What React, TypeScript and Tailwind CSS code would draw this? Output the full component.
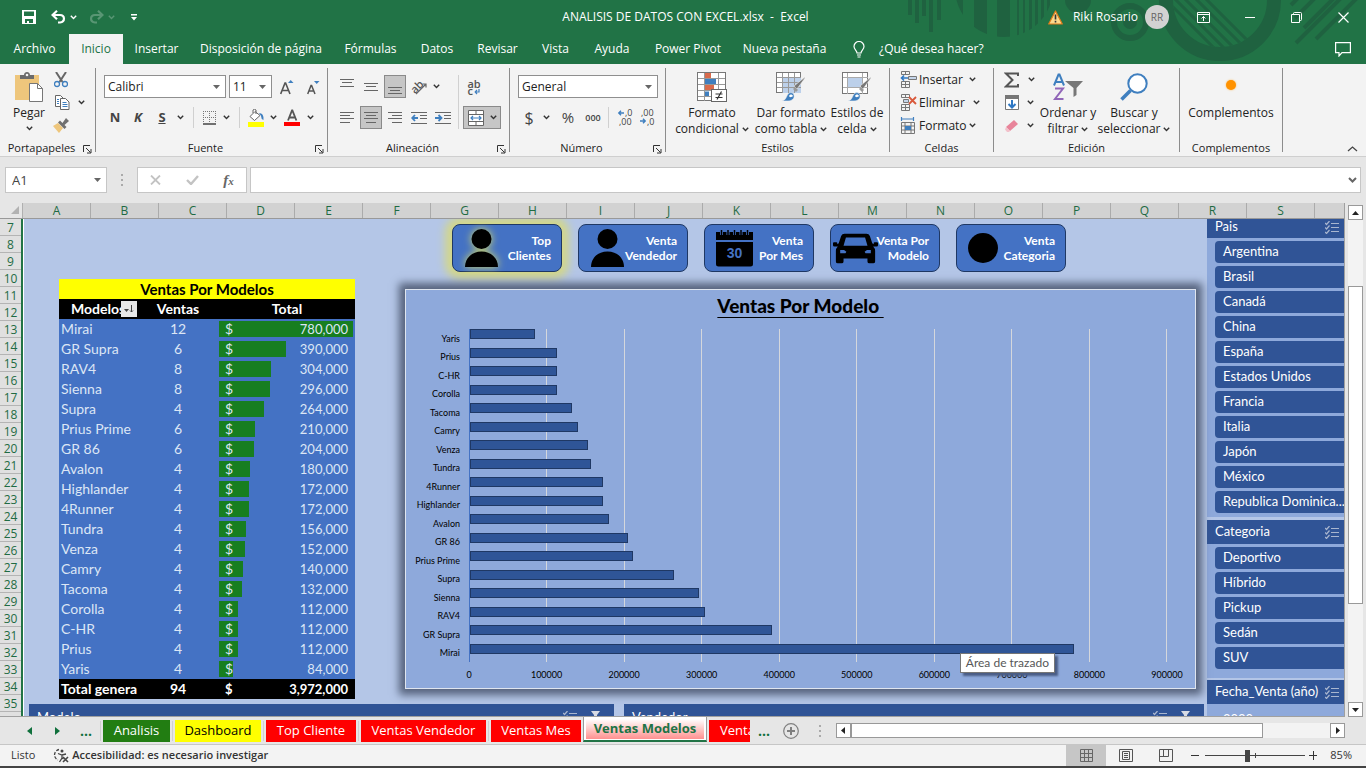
import React from "react";

const models: { name: string; sales: number; total: number }[] = [
  { name: "Mirai", sales: 12, total: 780000 },
  { name: "GR Supra", sales: 6, total: 390000 },
  { name: "RAV4", sales: 8, total: 304000 },
  { name: "Sienna", sales: 8, total: 296000 },
  { name: "Supra", sales: 4, total: 264000 },
  { name: "Prius Prime", sales: 6, total: 210000 },
  { name: "GR 86", sales: 6, total: 204000 },
  { name: "Avalon", sales: 4, total: 180000 },
  { name: "Highlander", sales: 4, total: 172000 },
  { name: "4Runner", sales: 4, total: 172000 },
  { name: "Tundra", sales: 4, total: 156000 },
  { name: "Venza", sales: 4, total: 152000 },
  { name: "Camry", sales: 4, total: 140000 },
  { name: "Tacoma", sales: 4, total: 132000 },
  { name: "Corolla", sales: 4, total: 112000 },
  { name: "C-HR", sales: 4, total: 112000 },
  { name: "Prius", sales: 4, total: 112000 },
  { name: "Yaris", sales: 4, total: 84000 },
];

const countries = ["Argentina", "Brasil", "Canadá", "China", "España", "Estados Unidos", "Francia", "Italia", "Japón", "México", "Republica Dominica..."];
const categories = ["Deportivo", "Híbrido", "Pickup", "Sedán", "SUV"];

const menu: { label: string; width: string }[] = [
  { label: "Archivo", width: "w-[69px]" },
  { label: "Inicio", width: "w-[54px]" },
  { label: "Insertar", width: "w-[67px]" },
  { label: "Disposición de página", width: "w-[142px]" },
  { label: "Fórmulas", width: "w-[77px]" },
  { label: "Datos", width: "w-[56px]" },
  { label: "Revisar", width: "w-[65px]" },
  { label: "Vista", width: "w-[51px]" },
  { label: "Ayuda", width: "w-[62px]" },
  { label: "Power Pivot", width: "w-[90px]" },
  { label: "Nueva pestaña", width: "w-[103px]" },
];

const money = (n: number) => n.toLocaleString("en-US");

/* ---------- small drawings ---------- */

function Caret({ className = "text-[#333]" }: { className?: string }) {
  return (
    <svg width="7" height="5" viewBox="0 0 7 5" className={`shrink-0 ${className}`} fill="none" stroke="currentColor" strokeWidth="1.4" aria-hidden>
      <path d="M.8.8 3.5 3.5 6.2.8" />
    </svg>
  );
}

function Triangle() {
  return (
    <svg width="7" height="4" viewBox="0 0 7 4" className="pointer-events-none absolute right-1.5 top-1/2 -mt-0.5" aria-hidden>
      <path d="M0 0h7L3.5 4z" fill="#666" />
    </svg>
  );
}

function Lines({ rows, color = "#666" }: { rows: [number, number, number][]; color?: string }) {
  return (
    <svg width="16" height="16" viewBox="0 0 16 16" stroke={color} aria-hidden>
      {rows.map(([y, a, b]) => (
        <path key={y} d={`M${a} ${y + 0.5}H${b}`} />
      ))}
    </svg>
  );
}

function Pattern() {
  return (
    <svg className="pointer-events-none absolute right-0 top-0" width="466" height="64" viewBox="0 0 466 64" aria-hidden>
      <defs>
        <clipPath id="globe"><circle cx="104" cy="-12" r="49" /></clipPath>
        <clipPath id="ringInner"><circle cx="320" cy="0" r="47" /></clipPath>
      </defs>
      <g fill="#1f6240" stroke="none">
        <path d="M8 0h4v15H8zM15 0h4v23h-4zM22 0h4v16h-4zM29 0h4v32h-4zM37 0h4v20h-4z" />
        <g clipPath="url(#globe)">
          <path d="M56 0h7v40h-7zM74 0h13v40H74zM97 0h13v40H97zM117 0h2v40h-2zM123 0h2v40h-2zM129 0h3v40h-3zM135 0h3v40h-3zM141 0h3v40h-3zM147 0h3v40h-3z" />
        </g>
        <circle cx="178" cy="0" r="13" />
        <circle cx="230" cy="22" r="7" />
      </g>
      <g fill="none" stroke="#1f6240">
        <circle cx="230" cy="22" r="16" strokeWidth="6" />
        <circle cx="320" cy="0" r="54" strokeWidth="14" />
        <g clipPath="url(#ringInner)" strokeWidth="3">
          <path d="M256-10l60 60M266-10l60 60M276-10l60 60M287-10l60 60M297-10l60 60" />
        </g>
        <path d="M391 5l8-8M395 18l22-22M404 28l32-32M396 43l46-46M416 39l42-42" strokeWidth="4" />
      </g>
    </svg>
  );
}

function GridIcon({ children, w = 28, h = 28 }: { children?: React.ReactNode; w?: number; h?: number }) {
  return (
    <svg width="32" height="30" viewBox="0 0 32 30" aria-hidden>
      <rect x="1.5" y="0.5" width={w} height={h} fill="#fff" stroke="#777" />
      {children}
    </svg>
  );
}

function Brush() {
  return (
    <g>
      <path d="M30 6 22 17l-3-3L30 5z" fill="#777" stroke="#f3f3f3" strokeWidth=".6" />
      <path d="m20 15 3 3-2 2-3-3z" fill="#999" />
      <path d="M7 29c4-1 4-4 6-7 2-2 5-2 6 1 1 4-3 6-6 6z" fill="#3f7fbf" stroke="#f3f3f3" strokeWidth=".6" />
      <path d="M14 24c1-2 3-2 4 0-1 1-3 2-4 0z" fill="#fff" />
    </g>
  );
}

function Checklist({ className = "text-[#a9b6cf]" }: { className?: string }) {
  return (
    <svg width="14" height="13" viewBox="0 0 14 13" fill="none" stroke="currentColor" className={className} aria-hidden>
      <path d="M0 2l1.5 1.5L4.500 0M0 6.500 1.500 8l3-3.500M0 11l1.500 1.500 3-3.500M6 2.500h8M6 6.500h8M6 10.500h8" strokeWidth="1.200" />
    </svg>
  );
}

function Person() {
  return (
    <svg width="33" height="38" viewBox="0 0 33 38" aria-hidden>
      <circle cx="16.500" cy="10" r="10" />
      <path d="M0 38c0-9 7-15.500 16.500-15.500S33 29 33 38z" />
    </svg>
  );
}

function CalendarShape() {
  return (
    <svg width="37" height="38" viewBox="0 0 37 38" aria-hidden>
      <path d="M0 3h37v8H0zM0 13h37v22q0 2.500-2.500 2.500h-32Q0 37.500 0 35z" />
      <g stroke="#4472c4" strokeWidth="3"><path d="M5.500 0v6M12 0v6M18.500 0v6M25 0v6M31.500 0v6" /></g>
      <g stroke="#000" strokeWidth="1.500"><path d="M5.500 1v5M12 1v5M18.500 1v5M25 1v5M31.500 1v5" /></g>
      <text x="18.500" y="29" textAnchor="middle" fontSize="14" fontWeight="700" fill="#4472c4" fontFamily="Liberation Sans, sans-serif">30</text>
    </svg>
  );
}

function CarShape() {
  return (
    <svg width="45" height="31" viewBox="0 0 47 31" aria-hidden>
      <path fillRule="evenodd" d="M12 0h23q2.500 0 3.500 2.500L41 10l1.500 1v-1q0-1 1-1H46q1 0 1 1v2q0 1.500-1.500 1.500H42q2 2 2 4.500v11q0 2-2 2h-4q-2 0-2-2v-3H11v3q0 2-2 2H5q-2 0-2-2V18q0-2.500 2-4.500H1.500Q0 13.500 0 12v-2q0-1 1-1h2.500q1 0 1 1v1L6 10l2.500-7.500Q9.500 0 12 0zM13.500 4 11 12.500h25L33.500 4zM7.500 17v3.500H13l1-1.500-2.500-2zM39.500 17v3.500H34L33 19l2.500-2z" />
    </svg>
  );
}

function CellsIcon({ kind }: { kind: "insert" | "delete" | "format" }) {
  if (kind === "format")
    return (
      <svg width="17" height="17" viewBox="0 0 17 17" fill="none" aria-hidden>
        <path d="M1.500 0v4M13.500 0v4M2 2h11" stroke="#3f7fbf" strokeWidth="1.200" />
        <path d="M1.500 5.500h13v11h-13zM1.500 9h13M1.500 13h13M5 5.500v11M11 5.500v11" stroke="#777" />
        <path d="M5 9h6v4H5z" fill="#3f7fbf" />
      </svg>
    );
  return (
    <svg width="17" height="17" viewBox="0 0 17 17" fill="none" aria-hidden>
      <path d="M1.500.5h8v3h-8zM5.500.5v3M1.500 10.500h8v6h-8zM5.500 10.500v6M1.500 13.500h8" stroke="#777" />
      {kind === "insert" ? (
        <>
          <path d="M8.500 5.500h8v3h-8z" stroke="#777" fill="#c5d5ea" />
          <path d="M8 7H1.500M4 4.500 1.500 7 4 9.500" stroke="#2f78c4" strokeWidth="1.600" />
        </>
      ) : (
        <>
          <path d="M3.500 5.500h5v3h-5z" stroke="#777" fill="#c5d5ea" />
          <path d="m9 3 7 7M16 3l-7 7" stroke="#d9593c" strokeWidth="1.800" />
        </>
      )}
    </svg>
  );
}

/* ---------- ribbon pieces ---------- */

function Group({ title, width, launcher, children }: { title: string; width: string; launcher?: boolean; children: React.ReactNode }) {
  return (
    <section className={`flex shrink-0 flex-col border-r border-[#8c8c8c] ${width}`}>
      <div className="flex h-[73px]">{children}</div>
      <div className="flex h-[11px] items-start text-[11px] leading-[14px] text-[#222]">
        <h2 className="flex-1 text-center">{title}</h2>
        {launcher && (
          <button aria-label={`Opciones de ${title}`} className="w-3 pt-1">
            <svg width="9" height="9" viewBox="0 0 9 9" fill="none" stroke="#333" aria-hidden>
              <path d="M.5 7V.5H7M3 3l4.500 4.500M8 4v4H4" />
            </svg>
          </button>
        )}
      </div>
    </section>
  );
}

function Big({ icon, lines, width, caret = "inline" }: { icon: React.ReactNode; lines: string[]; width: string; caret?: "inline" | "below" | "none" }) {
  return (
    <button className={`flex shrink-0 flex-col items-center pt-1 text-xs leading-4 whitespace-nowrap text-[#222] ${width}`}>
      <span className="mb-[3px] flex h-[30px] items-center">{icon}</span>
      {lines.map((line, i) => (
        <span key={line} className="flex items-center gap-[3px]">
          {line}
          {caret === "inline" && i === lines.length - 1 && <Caret />}
        </span>
      ))}
      {caret === "below" && <span className="flex h-3.5 items-center"><Caret /></span>}
    </button>
  );
}

function Tool({ label, width = "w-[22px]", active, children }: { label: string; width?: string; active?: boolean; children: React.ReactNode }) {
  return (
    <button aria-label={label} className={`flex h-[23px] shrink-0 items-center justify-center ${width} ${active ? "border border-[#8a8a8a] bg-[#c6c6c6]" : ""}`}>
      {children}
    </button>
  );
}

function Combo({ label, value, width }: { label: string; value: string; width: string }) {
  return (
    <div className={`relative h-[23px] ${width}`}>
      <select aria-label={label} className="block h-full w-full appearance-none border border-[#8f8f8f] bg-white pl-[3px] text-xs text-[#222]" defaultValue={value}>
        <option>{value}</option>
      </select>
      <Triangle />
    </div>
  );
}

function Rule({ className = "h-[21px]" }: { className?: string }) {
  return <span className={`w-px shrink-0 bg-[#d0d0d0] ${className}`} />;
}

function Ribbon() {
  return (
    <div className="flex h-[93px] shrink-0 overflow-hidden border-b border-[#cfcfcf] bg-[#f3f3f3] py-1">
      <Group title="Portapapeles" width="w-24" launcher>
        <Big
          width="w-[53px] pl-[5px]"
          lines={["Pegar"]}
          caret="below"
          icon={
            <svg width="28" height="30" viewBox="0 0 28 30" aria-hidden>
              <path d="M0 3h24v25H0z" fill="#eec67c" />
              <path d="M5 7V3h4c0-4 6-4 6 0h4v4z" fill="#6b6b6b" />
              <circle cx="12" cy="3" r="1.300" fill="#f3f3f3" />
              <path d="M14.500 11.500h8l5 5v13h-13z" fill="#fff" stroke="#777" />
              <path d="M22.500 11.500v5h5" fill="none" stroke="#777" />
            </svg>
          }
        />
        <div className="flex flex-col">
          <Tool label="Cortar" width="w-4">
            <svg width="14" height="16" viewBox="0 0 14 16" fill="none" aria-hidden>
              <path d="m2 0 6.500 10M12 0 5.500 10" stroke="#666" strokeWidth="2" />
              <circle cx="3" cy="12" r="2.500" stroke="#3f7fbf" strokeWidth="1.300" />
              <circle cx="11" cy="12" r="2.500" stroke="#3f7fbf" strokeWidth="1.300" />
            </svg>
          </Tool>
          <Tool label="Copiar" width="w-8">
            <svg width="16" height="15" viewBox="0 0 16 15" fill="#fff" className="mr-2" aria-hidden>
              <path d="M1.500.5h5l3 3v8h-8z" stroke="#666" />
              <path d="M6.500 3.500h5l3.500 3.500v7.500H6.500z" stroke="#666" />
              <path d="M3 4.500h2M3 6.500h2M3 8.500h2M8.500 7.500h4M8.500 9.500h5M8.500 11.500h5" stroke="#3f7fbf" />
            </svg>
            <Caret />
          </Tool>
          <Tool label="Copiar formato" width="w-4">
            <svg width="16" height="15" viewBox="0 0 16 15" aria-hidden>
              <path d="m0 8 5-3 5 5-4 5z" fill="#eec67c" />
              <path d="m5 4.500 2-2 2.500 2.500L13 0l3 3-4.500 4 2 2-2 2z" fill="#707070" />
            </svg>
          </Tool>
        </div>
      </Group>

      <Group title="Fuente" width="w-[232px]" launcher>
        <div className="flex flex-col gap-2 pl-2 pt-[7px]">
          <div className="flex gap-[3px]">
            <Combo label="Fuente" value="Calibri" width="w-[122px]" />
            <Combo label="Tamaño de fuente" value="11" width="w-[43px]" />
            <Tool label="Aumentar tamaño" width="w-6">
              <svg width="14" height="16" viewBox="0 0 14 16" fill="none" aria-hidden>
                <path d="M.7 15 5 4h.6L10 15M2.500 11.500h5.700" stroke="#555" strokeWidth="1.600" />
                <path d="M8 4h5.500L10.700 1z" fill="#3f7fbf" />
              </svg>
            </Tool>
            <Tool label="Disminuir tamaño" width="w-[22px]">
              <svg width="13" height="16" viewBox="0 0 13 16" fill="none" aria-hidden>
                <path d="M.7 15 4 6.500h.6L8 15M2.200 12h4" stroke="#555" strokeWidth="1.500" />
                <path d="M7 2h5.500L9.700 5z" fill="#3f7fbf" />
              </svg>
            </Tool>
          </div>
          <div className="flex items-center text-[13px] font-bold text-[#444]">
            <Tool label="Negrita" width="w-[22px]">N</Tool>
            <Tool label="Cursiva" width="w-6"><i>K</i></Tool>
            <Tool label="Subrayado" width="w-6"><u>S</u></Tool>
            <Tool label="Más subrayados" width="w-3"><Caret /></Tool>
            <span className="flex w-3.5 justify-center"><Rule /></span>
            <Tool label="Bordes" width="w-5">
              <svg width="14" height="14" viewBox="0 0 14 14" stroke="#777" strokeDasharray="1 1" aria-hidden>
                <path d="M0 .5h13M0 6.500h13M.5 0v12M6.500 0v12M12.500 0v12" />
                <path d="M0 13h13" strokeDasharray="none" stroke="#444" strokeWidth="1.500" />
              </svg>
            </Tool>
            <Tool label="Más bordes" width="w-3"><Caret /></Tool>
            <span className="flex w-3.5 justify-center"><Rule /></span>
            <Tool label="Color de relleno" width="w-5">
              <svg width="18" height="18" viewBox="0 0 18 18" aria-hidden>
                <path d="M1 13h16v5H1z" fill="#ff0" />
                <path d="M8 2.500 3 7.500l4.500 4L13 6.500 8 2.500zM6 4V1q1.500-1.500 3 0v4" fill="#fff" stroke="#666" />
                <path d="M12 4q5 0 4.500 7-2.500-1-2.500-4z" fill="#3f7fbf" />
              </svg>
            </Tool>
            <Tool label="Más colores de relleno" width="w-3.5"><Caret /></Tool>
            <Tool label="Color de fuente" width="w-6">
              <svg width="16" height="18" viewBox="0 0 16 18" aria-hidden>
                <path d="M4 11.500 8 1.500h.4l4 10M5.500 8.500h5.500" fill="none" stroke="#555" strokeWidth="1.800" />
                <path d="M0 13h16v4H0z" fill="#f00" />
              </svg>
            </Tool>
            <Tool label="Más colores de fuente" width="w-3"><Caret /></Tool>
          </div>
        </div>
      </Group>

      <Group title="Alineación" width="w-[182px]" launcher>
        <div className="flex flex-col gap-2 pl-2 pt-[7px]">
          <div className="flex gap-0.5">
            <Tool label="Alinear arriba"><Lines rows={[[0, 1, 15], [3, 3, 13], [7, 1, 15]]} /></Tool>
            <Tool label="Alinear al medio"><Lines rows={[[4, 1, 15], [7, 3, 13], [11, 1, 15]]} /></Tool>
            <Tool label="Alinear abajo" active><Lines rows={[[8, 1, 15], [11, 3, 13], [14, 1, 15]]} /></Tool>
            <Tool label="Orientación">
              <svg width="17" height="16" viewBox="0 0 17 16" aria-hidden>
                <text x="0" y="12" transform="rotate(-45 6 9)" fontSize="11" fontWeight="600" fill="#555">ab</text>
                <path d="M5 15 15 5M11.500 5H15v3.500" fill="none" stroke="#666" strokeWidth="1.200" />
              </svg>
            </Tool>
            <Tool label="Más orientaciones" width="w-2"><Caret /></Tool>
          </div>
          <div className="flex gap-0.5">
            <Tool label="Alinear a la izquierda"><Lines rows={[[2, 1, 15], [5, 1, 11], [8, 1, 15], [12, 1, 11]]} /></Tool>
            <Tool label="Centrar" active><Lines rows={[[2, 1, 15], [5, 3, 13], [8, 1, 15], [12, 3, 13]]} /></Tool>
            <Tool label="Alinear a la derecha"><Lines rows={[[2, 1, 15], [5, 5, 15], [8, 1, 15], [12, 5, 15]]} /></Tool>
            <Tool label="Disminuir sangría">
              <svg width="16" height="16" viewBox="0 0 16 16" fill="none" aria-hidden>
                <path d="M0 2.500h16M9 5.500h7M9 8.500h7M0 13.500h16" stroke="#666" />
                <path d="M7 8H1.500M4 5 1.200 8 4 11" stroke="#3f7fbf" strokeWidth="1.800" />
              </svg>
            </Tool>
            <Tool label="Aumentar sangría">
              <svg width="16" height="16" viewBox="0 0 16 16" fill="none" aria-hidden>
                <path d="M0 2.500h16M9 5.500h7M9 8.500h7M0 13.500h16" stroke="#666" />
                <path d="M0 8h6M3.500 5l3 3-3 3" stroke="#3f7fbf" strokeWidth="1.800" />
              </svg>
            </Tool>
          </div>
        </div>
        <div className="flex pl-1 pt-[7px]">
          <Rule className="h-[54px]" />
        </div>
        <div className="flex flex-col gap-2 pl-1 pt-[7px]">
          <Tool label="Ajustar texto">
            <span className="relative text-left text-[11px] leading-[7px] font-semibold text-[#555]">
              <span className="block">ab</span>
              <span className="block">c</span>
              <svg width="7" height="6" viewBox="0 0 7 6" fill="none" className="absolute -bottom-px right-0" aria-hidden>
                <path d="M5 0v3H1.500M3 1 1.200 3 3 5" stroke="#3f7fbf" strokeWidth="1.200" />
              </svg>
            </span>
          </Tool>
          <Tool label="Combinar y centrar" width="w-[38px]" active>
            <svg width="16" height="16" viewBox="0 0 16 16" fill="none" className="mr-1.5" aria-hidden>
              <path d="M.5.5h15v15H.5z" fill="#fff" stroke="#666" />
              <path d="M0 4.500h16M0 11.500h16M8 0v4.500M8 11.500V16" stroke="#666" />
              <path d="M3 8h10M5 6 3 8l2 2M11 6l2 2-2 2" stroke="#3f7fbf" strokeWidth="1.200" />
            </svg>
            <Caret />
          </Tool>
        </div>
      </Group>

      <Group title="Número" width="w-[156px]" launcher>
        <div className="flex flex-col gap-2 pl-2 pt-[7px]">
          <Combo label="Formato de número" value="General" width="w-[140px]" />
          <div className="flex items-center text-[#444]">
            <Tool label="Moneda"><span className="text-base">$</span></Tool>
            <Tool label="Más monedas" width="w-3"><Caret /></Tool>
            <Tool label="Porcentaje" width="w-8"><span className="text-[15px]">%</span></Tool>
            <Tool label="Millares" width="w-[18px]"><span className="text-[9px] font-semibold">000</span></Tool>
            <span className="flex w-3 justify-center"><Rule /></span>
            <Tool label="Aumentar decimales">
              <svg width="17" height="17" viewBox="0 0 17 17" aria-hidden>
                <text x="8" y="7" fontSize="9" fill="#444">,0</text>
                <text x="2" y="16" fontSize="9" fill="#444">,00</text>
                <path d="M7 4H2M4 1.800 1.800 4 4 6.200" fill="none" stroke="#3f7fbf" strokeWidth="1.400" />
              </svg>
            </Tool>
            <Tool label="Disminuir decimales">
              <svg width="17" height="17" viewBox="0 0 17 17" aria-hidden>
                <text x="2" y="7" fontSize="9" fill="#444">,00</text>
                <text x="8" y="16" fontSize="9" fill="#444">,0</text>
                <path d="M1 12h5M4 9.800 6.200 12 4 14.200" fill="none" stroke="#3f7fbf" strokeWidth="1.400" />
              </svg>
            </Tool>
          </div>
        </div>
      </Group>

      <Group title="Estilos" width="w-[224px]">
        <Big
          width="ml-1 w-[84px]"
          lines={["Formato", "condicional"]}
          icon={
            <GridIcon>
              <path d="M9 1h6v5.500H9zM9 13h9v5.500H9z" fill="#d96b4c" />
              <path d="M9 7h11v5.500H9zM9 19.500h4V25H9z" fill="#3f7fbf" />
              <path d="M2 6.500h27M2 12.500h27M2 18.500h27M2 24.500h27M8.500 1v28M22.500 1v28" fill="none" stroke="#999" />
              <rect x="15.500" y="17.500" width="15" height="12" fill="#fff" stroke="#666" />
              <path d="M19.500 22h7M19.500 25.500h7M25.500 19.500l-4.500 8" stroke="#333" strokeWidth="1.200" />
            </GridIcon>
          }
        />
        <Big
          width="w-[74px]"
          lines={["Dar formato", "como tabla"]}
          icon={
            <GridIcon w={24} h={20}>
              <path d="M8 6h18v15H8z" fill="#bcd0ea" />
              <path d="M2 5.500h24M2 10.500h24M2 15.500h24M7.500 1v20M13.500 1v20M19.500 1v20" stroke="#999" />
              <Brush />
            </GridIcon>
          }
        />
        <Big
          width="w-[58px]"
          lines={["Estilos de", "celda"]}
          icon={
            <GridIcon w={25} h={21}>
              <path d="M7 6h14v9H7z" fill="#bcd0ea" />
              <path d="M2 5.500h25M2 15.500h25M6.500 1v21M21.500 1v21" stroke="#aaa" />
              <Brush />
            </GridIcon>
          }
        />
      </Group>

      <Group title="Celdas" width="w-[104px]">
        <div className="flex flex-col pl-2.5 text-xs text-[#222]">
          <button className="flex h-[23px] items-center gap-0.5"><CellsIcon kind="insert" />Insertar<span className="ml-1"><Caret /></span></button>
          <button className="flex h-[23px] items-center gap-0.5"><CellsIcon kind="delete" />Eliminar<span className="ml-1.5"><Caret /></span></button>
          <button className="flex h-[23px] items-center gap-0.5"><CellsIcon kind="format" />Formato<Caret /></button>
        </div>
      </Group>

      <Group title="Edición" width="w-[186px]">
        <div className="flex w-[43px] flex-col pl-2.5">
          <button aria-label="Autosuma" className="flex h-[23px] items-center gap-2">
            <svg width="16" height="16" viewBox="0 0 16 16" fill="none" stroke="#555" strokeWidth="2" aria-hidden><path d="M14 4V1.500H2L8.500 8 2 14.500h12V12" /></svg>
            <Caret />
          </button>
          <button aria-label="Rellenar" className="flex h-[23px] items-center gap-2 pl-px">
            <svg width="14" height="15" viewBox="0 0 14 15" fill="none" aria-hidden>
              <path d="M.5.5h13v14H.5z" fill="#fff" stroke="#777" /><path d="M0 0h14v4H0z" fill="#777" />
              <path d="M7 5v7M3.500 9 7 12.500 10.500 9" stroke="#2f78c4" strokeWidth="2" />
            </svg>
            <Caret />
          </button>
          <button aria-label="Borrar" className="flex h-[23px] items-center gap-2 pl-px">
            <svg width="14" height="14" viewBox="0 0 14 14" aria-hidden>
              <path d="m1 8 8-7 4 4-8 7z" fill="#e8849a" /><path d="m1 8 4 4-1 1H2L0 10.500z" fill="#f3c1cb" />
            </svg>
            <Caret />
          </button>
        </div>
        <Big
          width="w-[62px]"
          lines={["Ordenar y", "filtrar"]}
          icon={
            <svg width="30" height="28" viewBox="0 0 30 28" fill="none" aria-hidden>
              <path d="m1 12.500 4.500-11h1l4.500 11M2.800 9h6.400" stroke="#3f7fbf" strokeWidth="2" />
              <path d="M2 15.500h8L2 26h8.500" stroke="#9166b8" strokeWidth="2" />
              <path d="M12 8h18l-6.500 7v7l-3 2v-9z" fill="#777" />
            </svg>
          }
        />
        <Big
          width="w-[70px]"
          lines={["Buscar y", "seleccionar"]}
          icon={
            <svg width="28" height="28" viewBox="0 0 28 28" fill="none" aria-hidden>
              <circle cx="17.500" cy="10.500" r="9.200" fill="#fff" stroke="#3f7fbf" strokeWidth="2" />
              <path d="m10.500 17.500-9 9" stroke="#3f7fbf" strokeWidth="3.500" />
            </svg>
          }
        />
      </Group>

      <Group title="Complementos" width="w-[103px]">
        <Big
          width="w-full"
          caret="none"
          lines={["Complementos"]}
          icon={<span className="mb-1 size-2.5 rounded-full bg-[#ff9200] shadow-[0_0_2px_#ffb850]" />}
        />
      </Group>

      <button aria-label="Contraer la cinta" className="ml-auto flex items-end pr-2">
        <svg width="11" height="6" viewBox="0 0 11 6" fill="none" stroke="#444" strokeWidth="1.300" aria-hidden><path d="m1 5 4.500-4L10 5" /></svg>
      </button>
    </div>
  );
}

/* ---------- window chrome ---------- */

function TitleBar() {
  return (
    <div className="relative flex h-[34px] shrink-0 items-center text-white">
      <div className="flex flex-1 items-center pl-[22px]">
        <button aria-label="Guardar" className="mr-[15px]">
          <svg width="14" height="14" viewBox="0 0 14 14" aria-hidden>
            <path fillRule="evenodd" d="M0 0h14v14H0zM2 1.500V6h10V1.500zM3 9v4h2v-2h2v2h4V9z" fill="#fff" />
          </svg>
        </button>
        <button aria-label="Deshacer" className="mr-1.5 flex items-center gap-1">
          <svg width="15" height="14" viewBox="0 0 15 14" fill="none" stroke="#fff" strokeWidth="2.200" aria-hidden><path d="M6 .8 1.500 5 6 9.200M2 5h7c5 0 5.500 7 0 7.500H7" /></svg>
          <Caret className="text-white" />
        </button>
        <button aria-label="Rehacer" className="ml-1.5 mr-3.5 flex items-center gap-1 opacity-25">
          <svg width="15" height="14" viewBox="0 0 15 14" fill="none" stroke="#fff" strokeWidth="2.200" aria-hidden><path d="m9 .8 4.500 4.200L9 9.200M13 5H6C1 5 .5 12 6 12.500h2" /></svg>
          <Caret className="text-white" />
        </button>
        <button aria-label="Personalizar barra" className="pl-0.5">
          <svg width="6" height="7" viewBox="0 0 6 7" fill="#fff" aria-hidden><path d="M0 0h6v1.500H0zM0 3h6L3 6.500z" /></svg>
        </button>
      </div>
      <h1 className="text-xs whitespace-pre">ANALISIS DE DATOS CON EXCEL.xlsx{"  -  "}Excel</h1>
      <div className="flex flex-1 items-center justify-end pr-[17px]">
        <svg width="15" height="15" viewBox="0 0 15 15" className="mr-2.5" aria-hidden>
          <path d="M7.500 1 14.300 14H.7z" fill="#fbd98c" stroke="#e07b1a" strokeWidth="1.200" strokeLinejoin="round" />
          <path d="M7.500 4.500v5M7.500 10.800v1.700" stroke="#333" strokeWidth="1.600" />
        </svg>
        <span className="mr-[7px] text-xs">Riki Rosario</span>
        <span className="flex size-6 items-center justify-center rounded-full bg-[#d2d2d2] text-[10px] text-[#666]">RR</span>
        <button aria-label="Opciones de la cinta" className="ml-7">
          <svg width="13" height="11" viewBox="0 0 13 11" fill="none" stroke="#fff" aria-hidden><path d="M.5.5h12v10H.5zM.5 2.500h12M6.500 9V4.500M4.500 6.500l2-2 2 2" /></svg>
        </button>
        <button aria-label="Minimizar" className="ml-[35px]">
          <svg width="10" height="11" viewBox="0 0 10 11" stroke="#fff" aria-hidden><path d="M0 5.500h10" /></svg>
        </button>
        <button aria-label="Restaurar" className="ml-9">
          <svg width="11" height="11" viewBox="0 0 11 11" fill="none" stroke="#fff" aria-hidden><path d="M.5 2.500h8v8h-8zM2.500 2.500v-1q0-1 1-1h6q1 0 1 1v6q0 1-1 1h-1" /></svg>
        </button>
        <button aria-label="Cerrar" className="ml-9">
          <svg width="11" height="11" viewBox="0 0 11 11" stroke="#fff" strokeWidth="1.200" aria-hidden><path d="m.5.5 10 10M10.500.5l-10 10" /></svg>
        </button>
      </div>
    </div>
  );
}

function MenuBar() {
  return (
    <nav className="relative flex h-[30px] shrink-0 items-stretch text-xs whitespace-nowrap text-white">
      {menu.map(({ label, width }) => (
        <button key={label} className={`${width} ${label === "Inicio" ? "bg-[#f3f3f3] text-[#217346]" : ""}`}>{label}</button>
      ))}
      <button className="ml-[17px] flex items-center gap-3.5">
        <svg width="12" height="17" viewBox="0 0 12 17" fill="none" stroke="#fff" strokeWidth="1.200" aria-hidden>
          <path d="M4 12c0-2.500-3-3.500-3-6.500a5 5 0 0 1 10 0C11 8.500 8 9.500 8 12zM4 14h4M4.500 16h3" />
        </svg>
        ¿Qué desea hacer?
      </button>
      <button aria-label="Comentarios" className="ml-auto pr-[15px]">
        <svg width="16" height="15" viewBox="0 0 16 15" fill="none" stroke="#fff" strokeWidth="1.200" aria-hidden><path d="M.6.6h14.800v10H7l-3 3.400v-3.400H.6z" /></svg>
      </button>
    </nav>
  );
}

function FormulaBar() {
  return (
    <div className="flex h-[46px] shrink-0 items-center bg-[#e6e6e6] pl-[5px] pr-[5px]">
      <div className="relative h-[26px] w-[102px]">
        <input aria-label="Cuadro de nombres" className="block h-full w-full border border-[#c6c6c6] bg-white pl-1.5 text-[13px] text-[#444]" defaultValue="A1" />
        <Triangle />
      </div>
      <span className="flex w-[30px] flex-col items-center gap-[3px]">
        <i className="size-0.5 bg-[#aaa]" /><i className="size-0.5 bg-[#aaa]" /><i className="size-0.5 bg-[#aaa]" />
      </span>
      <div className="mr-[3px] flex h-[26px] w-[110px] items-center justify-around border border-[#c6c6c6] bg-white">
        <button aria-label="Cancelar"><svg width="11" height="10" viewBox="0 0 11 10" stroke="#c3c3c3" strokeWidth="1.800" aria-hidden><path d="m1 .5 9 9M10 .5l-9 9" /></svg></button>
        <button aria-label="Introducir"><svg width="13" height="10" viewBox="0 0 13 10" fill="none" stroke="#c3c3c3" strokeWidth="2.400" aria-hidden><path d="m1 5 4 4 7-8" /></svg></button>
        <button aria-label="Insertar función" className="font-['Liberation_Serif',serif] text-[15px] leading-4 font-bold text-[#666] italic">f<span className="text-[11px]">x</span></button>
      </div>
      <div className="relative h-[26px] min-w-0 flex-1">
        <input aria-label="Barra de fórmulas" className="block h-full w-full border border-[#c6c6c6] bg-white px-2 text-xs" />
        <svg width="9" height="7" viewBox="0 0 9 7" fill="none" stroke="#666" strokeWidth="2" className="pointer-events-none absolute right-1 top-2.5" aria-hidden><path d="m1 1 3.500 3.500L8 1" /></svg>
      </div>
    </div>
  );
}

/* ---------- worksheet ---------- */

function NavShape({ lines, icon, pad, glow }: { lines: [string, string]; icon: React.ReactNode; pad: string; glow?: boolean }) {
  return (
    <button
      className={`flex h-12 w-[110px] shrink-0 items-center rounded-lg border border-[#1f3864] bg-[#4472c4] pr-2.5 text-right text-xs leading-[15px] font-bold whitespace-nowrap text-white ${pad} ${glow ? "shadow-[0_0_8px_7px_#d3d78a]" : ""}`}
    >
      <span className={`shrink-0 ${glow ? "drop-shadow-[0_0_4px_#d8dc60]" : ""}`}>{icon}</span>
      <span className="flex min-w-0 flex-1 justify-end"><span>{lines[0]}<br />{lines[1]}</span></span>
    </button>
  );
}

function ModelTable() {
  return (
    <table className="w-[296px] shrink-0 table-fixed border-collapse bg-[#4472c4] text-sm leading-5 text-[#dce6f5]">
      <colgroup><col className="w-[78px]" /><col className="w-[82px]" /><col className="w-[136px]" /></colgroup>
      <thead className="leading-5 font-bold">
        <tr><th colSpan={3} className="h-5 bg-[#ff0] p-0 text-[15px] leading-5 text-black">Ventas Por Modelos</th></tr>
        <tr className="bg-black text-white">
          <th className="h-5 p-0">
            <div className="flex h-5 items-center pl-3">
              <span className="w-[50px] overflow-hidden text-left">Modelos</span>
              <button aria-label="Filtrar modelos" className="flex size-4 items-center justify-center bg-[#e8e8e8]">
                <svg width="10" height="9" viewBox="0 0 10 9" aria-hidden><path d="M0 4h5L2.500 7z" fill="#444" /><path d="M7.500 0v7M6 5.500 7.500 7 9 5.500" fill="none" stroke="#444" /></svg>
              </button>
            </div>
          </th>
          <th className="h-5 p-0">Ventas</th>
          <th className="h-5 p-0">Total</th>
        </tr>
      </thead>
      <tbody>
        {models.map((m) => (
          <tr key={m.name}>
            <td className="h-5 p-0 pl-0.5 whitespace-nowrap">{m.name}</td>
            <td className="h-5 p-0 text-center">{m.sales}</td>
            <td className="h-5 p-0 text-[13px] leading-5">
              <div className="relative flex h-5 justify-between pl-1.5 pr-[7px]">
                <span className="absolute left-0 top-0.5 h-4 bg-[#177e20]" style={{ width: Math.round((m.total / 780000) * 134) }} />
                <span className="relative text-sm leading-5">$</span>
                <span className="relative">{money(m.total)}</span>
              </div>
            </td>
          </tr>
        ))}
        <tr className="bg-black font-bold text-white">
          <td className="h-5 p-0 pl-0.5 whitespace-nowrap">Total genera</td>
          <td className="h-5 p-0 text-center">94</td>
          <td className="h-5 p-0 text-[13px] leading-5"><div className="flex justify-between pl-1.5 pr-[7px]"><span>$</span><span>3,972,000</span></div></td>
        </tr>
      </tbody>
    </table>
  );
}

function Chart() {
  const bars = [...models].reverse();
  return (
    <figure className="relative flex h-[400px] flex-col border border-[#dfe5ef] bg-[#8ea9db] text-[9px] text-black shadow-[0_0_8px_6px_#56637d]">
      <figcaption className="h-[39px] text-center text-[19px] leading-8 font-black whitespace-pre underline decoration-1 underline-offset-4">Ventas Por Modelo </figcaption>
      <div className="flex h-[333px] gap-[9px] pr-7">
        <ul className="flex w-[54px] flex-col text-right whitespace-nowrap">
          {bars.map((b) => <li key={b.name} className="flex flex-1 items-center justify-end">{b.name}</li>)}
        </ul>
        <div className="relative min-w-0 flex-1">
          <div className="absolute inset-0 flex border-l border-[#dde3ee]">
            {Array.from({ length: 9 }, (_, i) => <span key={i} className="flex-1 border-r border-[#d4d7dc]" />)}
          </div>
          <div className="relative flex h-full flex-col border-l border-[#4472c4]">
            {bars.map((b) => (
              <div key={b.name} className="flex-1">
                <div className="h-2.5 border border-[#1f3864] bg-[#2f5597]" style={{ width: `${b.total / 9000}%` }} />
              </div>
            ))}
          </div>
        </div>
      </div>
      <div className="ml-[63px] mr-7 flex justify-between pt-1.5">
        {Array.from({ length: 10 }, (_, i) => <span key={i} className="flex w-0 justify-center">{i * 100000}</span>)}
      </div>
      <div role="tooltip" className="absolute bottom-[15px] right-[140px] border border-[#767676] bg-white px-[5px] text-xs leading-[18px] whitespace-nowrap text-[#575757] shadow-[3px_3px_2px_#4a5d85]">
        Área de trazado
      </div>
    </figure>
  );
}

function SlicerHeader({ title, height = "h-6" }: { title: string; height?: string }) {
  return (
    <div className={`flex shrink-0 items-center justify-between bg-[#305496] pl-2 pr-[5px] text-[13px] whitespace-nowrap text-white ${height}`}>
      {title}
      <Checklist />
    </div>
  );
}

function SlicerItems({ items }: { items: string[] }) {
  return (
    <div className="flex flex-col gap-[3px] bg-[#8ea9db] pl-2 pt-[3px]">
      {items.map((item) => (
        <button key={item} className="h-[22px] rounded-l bg-[#305496] pl-2 text-left text-[13px] whitespace-nowrap text-white">{item}</button>
      ))}
    </div>
  );
}

function WideSlicer({ title, grow }: { title: string; grow: string }) {
  return (
    <div className={`flex h-10 items-start bg-[#305496] pl-2 pr-[11px] pt-[5px] text-[13px] leading-4 text-white ${grow}`}>
      {title}
      <span className="ml-auto mr-[14px] pt-0.5"><Checklist /></span>
      <svg width="12" height="13" viewBox="0 0 12 13" className="mt-0.5" aria-hidden><path d="M0 0h9L6 4v5l-3-2V4z" fill="#d7dbe4" /><path d="m7 6 4 4M11 6l-4 4" stroke="#d7dbe4" /></svg>
    </div>
  );
}

function Sheet() {
  return (
    <div className="flex min-h-0 flex-1 bg-[#e6e6e6]">
      <div className="flex min-w-0 flex-1 flex-col border-r border-b border-[#a0a0a0]">
        <div className="flex h-4 shrink-0 overflow-hidden border-b border-[#999] bg-[#d2d2d2] text-xs leading-[15px] text-[#1e6b43]">
          <span className="flex w-[23px] shrink-0 items-end justify-end border-r border-[#b0b0b0] bg-[#e6e6e6] pb-1 pr-[3px]">
            <svg width="8" height="8" viewBox="0 0 8 8" aria-hidden><path d="M8 0v8H0z" fill="#b2b2b2" /></svg>
          </span>
          {"ABCDEFGHIJKLMNOPQRS".split("").map((c) => (
            <span key={c} className="w-[68px] shrink-0 border-r border-[#ababab] text-center">{c}</span>
          ))}
        </div>
        <div className="flex min-h-0 flex-1 overflow-hidden">
          <div className="w-[23px] shrink-0 border-r-2 border-[#217346] bg-[#e0e0e0] text-center text-xs leading-[17px] text-[#1e6b43]">
            {Array.from({ length: 30 }, (_, i) => <div key={i} className="h-[17px] border-b border-[#b4b4b4]">{i < 29 ? i + 7 : ""}</div>)}
          </div>
          <div className="flex min-w-0 flex-1 border-l border-white bg-[#b4c6e7] font-['Lato','Noto_Sans',sans-serif]">
            <div className="flex min-w-0 flex-1 flex-col">
              <div className="flex shrink-0 pl-[35px] pr-[11px]">
                <div className="pt-[60px]"><ModelTable /></div>
                <div className="flex min-w-0 flex-1 flex-col pl-[50px]">
                  <div className="mb-[17px] flex gap-4 pl-[47px] pt-[5px]">
                    <NavShape glow lines={["Top", "Clientes"]} pad="pl-3" icon={<Person />} />
                    <NavShape lines={["Venta", "Vendedor"]} pad="pl-3" icon={<Person />} />
                    <NavShape lines={["Venta", "Por Mes"]} pad="pl-[11px]" icon={<CalendarShape />} />
                    <NavShape lines={["Venta Por", "Modelo"]} pad="pl-0.5" icon={<CarShape />} />
                    <NavShape lines={["Venta", "Categoria"]} pad="pl-[11px]" icon={<span className="block size-[30px] rounded-full bg-black" />} />
                  </div>
                  <Chart />
                </div>
              </div>
              <div className="mt-[5px] flex gap-2.5 pl-[5px] pr-[3px]">
                <WideSlicer title="Modelo" grow="flex-[585]" />
                <WideSlicer title="Vendedor" grow="flex-[580]" />
              </div>
            </div>
            <aside className="flex w-[137px] shrink-0 flex-col">
              <SlicerHeader title="Pais" height="h-[19px] pb-[3px]" />
              <div className="mb-[3px] shrink-0 bg-[#8ea9db] pb-1"><SlicerItems items={countries} /></div>
              <SlicerHeader title="Categoria" />
              <div className="mb-0.5 shrink-0 bg-[#8ea9db] pb-[9px]"><SlicerItems items={categories} /></div>
              <SlicerHeader title="Fecha_Venta (año)" />
              <div className="h-10 shrink-0 bg-[#8ea9db] pl-4 pt-1.5 text-[13px] text-white">2020</div>
            </aside>
          </div>
        </div>
      </div>
      <div className="flex w-[21px] shrink-0 flex-col items-center pr-px pt-0.5">
        <button aria-label="Subir" className="flex size-[15px] items-center justify-center border border-[#999] bg-white"><svg width="7" height="4" viewBox="0 0 7 4" aria-hidden><path d="M0 4h7L3.500 0z" fill="#222" /></svg></button>
        <div className="flex w-[15px] flex-1 flex-col bg-[#f3f3f3]">
          <span className="flex-[66]" />
          <span className="flex-[318] border border-[#999] bg-white" />
          <span className="flex-[99]" />
        </div>
        <button aria-label="Bajar" className="flex size-[15px] items-center justify-center border border-[#999] bg-white"><svg width="7" height="4" viewBox="0 0 7 4" aria-hidden><path d="M0 0h7L3.500 4z" fill="#222" /></svg></button>
      </div>
    </div>
  );
}

function SheetTabs() {
  const red = "bg-[#f00] text-white";
  return (
    <div className="flex h-7 shrink-0 items-center border-b border-[#c6c6c6] bg-[#e6e6e6] pr-[21px] text-[13px] whitespace-nowrap">
      <button aria-label="Hoja anterior" className="ml-[27px] mr-[23px]"><svg width="5" height="8" viewBox="0 0 5 8" aria-hidden><path d="M5 0v8L0 4z" fill="#10703c" /></svg></button>
      <button aria-label="Hoja siguiente" className="mr-5"><svg width="5" height="8" viewBox="0 0 5 8" aria-hidden><path d="M0 0v8l5-4z" fill="#10703c" /></svg></button>
      <button className="mr-2 text-sm font-bold text-[#10703c]">...</button>
      <div className="flex h-full items-center gap-0.5">
        <div className="flex items-center gap-0.5"><Rule className="h-5 bg-[#999]" /><button className="h-[22px] w-[67px] bg-[#227d12] text-white">Analisis</button></div>
        <div className="flex items-center gap-0.5"><Rule className="h-5 bg-[#999]" /><button className="h-[22px] w-[86px] bg-[#ff0] text-black">Dashboard</button></div>
        <div className="flex items-center gap-0.5"><Rule className="h-5 bg-[#999]" /><button className={`h-[22px] w-[90px] ${red}`}>Top Cliente</button></div>
        <div className="flex items-center gap-0.5"><Rule className="h-5 bg-[#999]" /><button className={`h-[22px] w-[125px] ${red}`}>Ventas Vendedor</button></div>
        <div className="flex items-center gap-0.5"><Rule className="h-5 bg-[#999]" /><button className={`h-[22px] w-[90px] ${red}`}>Ventas Mes</button></div>
        <button className="flex h-[25px] w-[124px] flex-col self-start border-x border-b-2 border-x-[#999] border-b-[#217346] bg-white px-0.5 pt-0.5 pb-px text-[13px] font-bold text-[#217346]">
          <span className="flex w-full flex-1 items-center justify-center bg-linear-to-b from-white to-[#ff9090]">Ventas Modelos</span>
        </button>
        <button className={`h-[22px] w-[41px] overflow-hidden pl-[11px] text-left ${red}`}>Ventas</button>
      </div>
      <button className="mx-2 text-sm font-bold text-[#10703c]">...</button>
      <button aria-label="Hoja nueva" className="ml-[5px]">
        <svg width="16" height="16" viewBox="0 0 16 16" fill="none" stroke="#808080" aria-hidden><circle cx="8" cy="8" r="7.300" strokeWidth="1.200" /><path d="M8 4v8M4 8h8" strokeWidth="2" /></svg>
      </button>
      <span className="ml-5 flex flex-col gap-[3px]"><i className="size-0.5 bg-[#aaa]" /><i className="size-0.5 bg-[#aaa]" /><i className="size-0.5 bg-[#aaa]" /></span>
      <div className="ml-[15px] flex h-[15px] flex-1 bg-[#f3f3f3]">
        <button aria-label="Desplazar a la izquierda" className="flex w-[15px] items-center justify-center border border-[#999] bg-white"><svg width="4" height="7" viewBox="0 0 4 7" aria-hidden><path d="M4 0v7L0 3.500z" fill="#222" /></svg></button>
        <span className="flex-[412] border border-[#999] bg-white" />
        <span className="flex-[67]" />
        <button aria-label="Desplazar a la derecha" className="flex w-[15px] items-center justify-center border border-[#999] bg-white"><svg width="4" height="7" viewBox="0 0 4 7" aria-hidden><path d="M0 0v7l4-3.500z" fill="#222" /></svg></button>
      </div>
    </div>
  );
}

function StatusBar() {
  return (
    <footer className="flex h-[23px] shrink-0 items-center border-b-2 border-[#444] bg-[#f3f3f3] pl-[11px] pr-3.5 text-[11px] text-[#333]">
      <span className="mr-[18px]">Listo</span>
      <button className="flex items-center gap-[3px] font-semibold">
        <svg width="16" height="15" viewBox="0 0 16 15" fill="none" stroke="#444" aria-hidden>
          <path d="M6 1.500A5.500 5.500 0 0 0 5 12" strokeDasharray="3 1.500" strokeWidth="1.300" />
          <path d="M5 5.500l4 1.500 4-1M9 7v3l-2.500 4M9 10l1.500 1" strokeWidth="1.300" /><circle cx="9" cy="3" r="1.500" fill="#444" stroke="none" />
          <path d="m10 9 5 5M15 9l-5 5" strokeWidth="1.600" />
        </svg>
        Accesibilidad: es necesario investigar
      </button>
      <div className="ml-auto flex h-full items-center">
        <button aria-label="Normal" className="flex h-full w-10 items-center justify-center bg-[#c6c6c6]"><svg width="13" height="13" viewBox="0 0 13 13" fill="none" stroke="#666" aria-hidden><path d="M.5.5h12v12H.5zM4.500.5v12M8.500.5v12M.5 4.500h12M.5 8.500h12" /></svg></button>
        <button aria-label="Diseño de página" className="flex h-full w-10 items-center justify-center"><svg width="14" height="13" viewBox="0 0 14 13" fill="none" stroke="#555" aria-hidden><path d="M.5.5h13v12H.5zM3.500 2.500h7v8h-7zM5 4.500h4M5 6.500h4M5 8.500h4" /></svg></button>
        <button aria-label="Salto de página" className="flex h-full w-10 items-center justify-center"><svg width="14" height="13" viewBox="0 0 14 13" fill="none" stroke="#555" aria-hidden><path d="M.5.5h13v12H.5zM4.500.5v7M9.500.5v7M.5 7.500h9" /></svg></button>
        <button aria-label="Alejar" className="ml-[5px] mr-1.5"><svg width="8" height="9" viewBox="0 0 8 9" stroke="#333" aria-hidden><path d="M0 4.500h8" /></svg></button>
        <span className="relative flex items-center">
          <input
            type="range"
            aria-label="Zoom"
            min={10}
            max={190}
            defaultValue={85}
            className="h-3 w-[100px] appearance-none bg-[linear-gradient(#444,#444)] bg-[length:100%_1px] bg-center bg-no-repeat [&::-webkit-slider-thumb]:h-3 [&::-webkit-slider-thumb]:w-[5px] [&::-webkit-slider-thumb]:appearance-none [&::-webkit-slider-thumb]:bg-[#444]"
          />
          <i className="pointer-events-none absolute left-1/2 h-[5px] w-px bg-[#444]" />
        </span>
        <button aria-label="Acercar" className="ml-1"><svg width="9" height="9" viewBox="0 0 9 9" stroke="#333" aria-hidden><path d="M0 4.500h8M4.500 0v9" /></svg></button>
        <span className="ml-3">85%</span>
      </div>
    </footer>
  );
}

export default function App() {
  return (
    <main className="flex h-screen flex-col overflow-hidden bg-[#e6e6e6] font-['Open_Sans','Noto_Sans',sans-serif]">
      <header className="relative shrink-0 overflow-hidden bg-[#217346]">
        <Pattern />
        <TitleBar />
        <MenuBar />
      </header>
      <Ribbon />
      <FormulaBar />
      <Sheet />
      <SheetTabs />
      <StatusBar />
    </main>
  );
}
